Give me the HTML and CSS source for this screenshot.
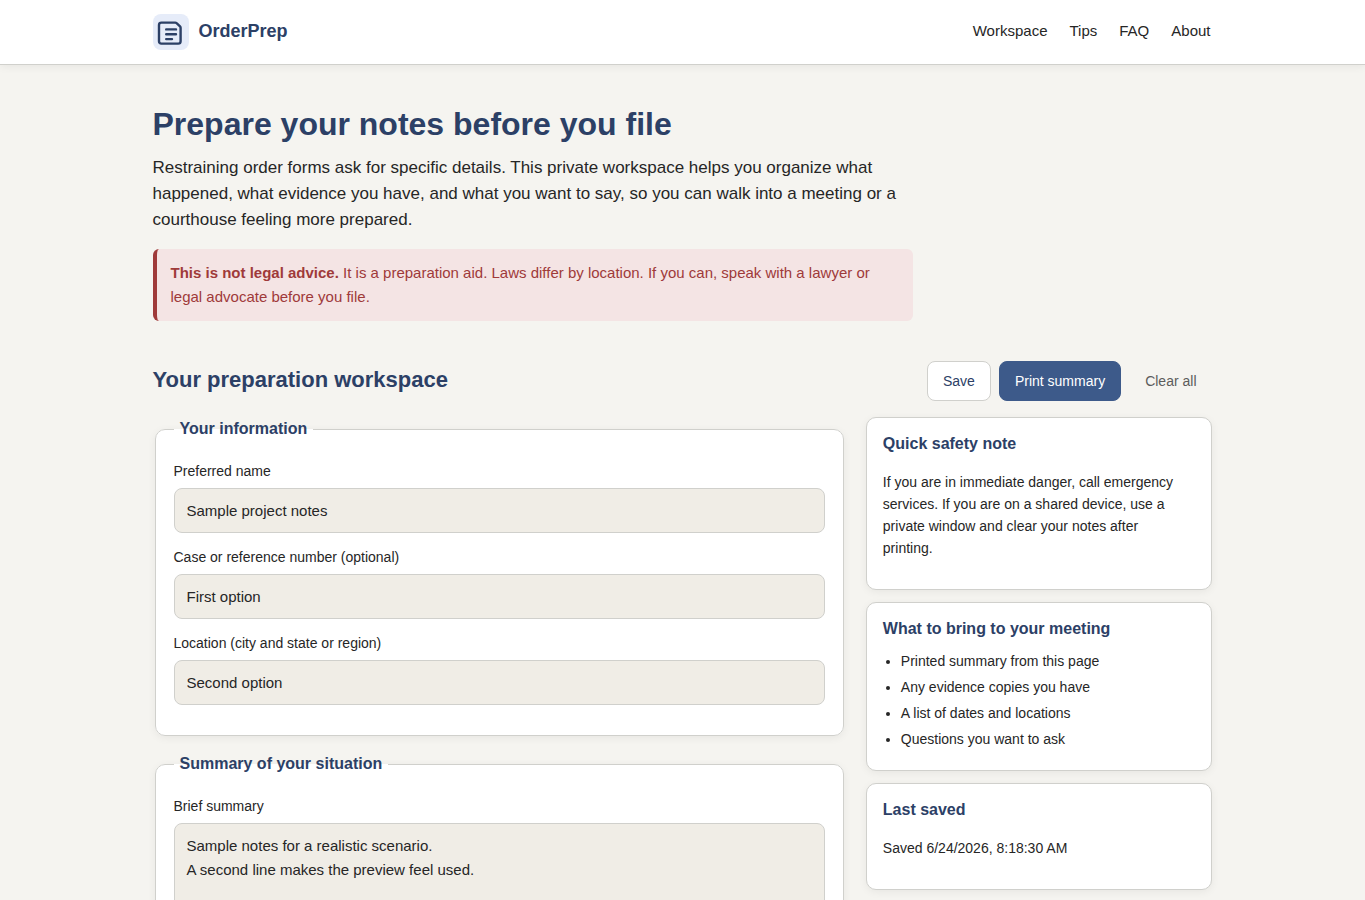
FILE: index.html
```html
<!DOCTYPE html>
<html lang="en">
<head>
  <meta charset="UTF-8">
  <meta name="viewport" content="width=device-width, initial-scale=1.0">
  <title>OrderPrep</title>
  <link rel="stylesheet" href="styles.css">
</head>
<body>
  <header class="site-header">
    <div class="container header-inner">
      <a class="brand" href="#">
        <svg class="logo" viewBox="0 0 36 36" aria-hidden="true">
          <rect width="36" height="36" rx="8" fill="#e6ecf9"/>
          <g fill="none" stroke="#2c4066" stroke-width="2.4" stroke-linecap="round" stroke-linejoin="round">
            <path d="M8.4 8.6H22.2Q23 8.6 23.6 9.2L27 12.4Q27.6 13 27.6 13.8V27.2Q27.6 29.6 25.2 29.6H8.4Q6 29.6 6 27.2V11Q6 8.6 8.4 8.6Z"/>
            <path d="M13.2 15.4H23M13.2 20.3H23M13.2 25.1H19"/>
          </g>
        </svg>
        <span>OrderPrep</span>
      </a>
      <nav class="site-nav">
        <a href="#workspace">Workspace</a>
        <a href="#tips">Tips</a>
        <a href="#faq">FAQ</a>
        <a href="#about">About</a>
      </nav>
    </div>
  </header>

  <main class="container">
    <section class="hero">
      <h1>Prepare your notes before you file</h1>
      <p class="lead">Restraining order forms ask for specific details. This private workspace helps you organize what happened, what evidence you have, and what you want to say, so you can walk into a meeting or a courthouse feeling more prepared.</p>
      <div class="notice">
        <strong>This is not legal advice.</strong> It is a preparation aid. Laws differ by location. If you can, speak with a lawyer or legal advocate before you file.
      </div>
    </section>

    <section id="workspace">
      <div class="workspace-header">
        <h2>Your preparation workspace</h2>
        <div class="actions">
          <button class="btn" type="button">Save</button>
          <button class="btn btn-primary" type="button">Print summary</button>
          <button class="btn btn-ghost" type="button">Clear all</button>
        </div>
      </div>

      <div class="workspace-grid">
        <form class="prep-form">
          <fieldset>
            <legend>Your information</legend>
            <label for="name">Preferred name</label>
            <input id="name" type="text" value="Sample project notes">
            <label for="case">Case or reference number (optional)</label>
            <input id="case" type="text" value="First option">
            <label for="location">Location (city and state or region)</label>
            <input id="location" type="text" value="Second option">
          </fieldset>

          <fieldset>
            <legend>Summary of your situation</legend>
            <label for="summary">Brief summary</label>
            <textarea id="summary" rows="5">Sample notes for a realistic scenario.
A second line makes the preview feel used.</textarea>
          </fieldset>
        </form>

        <aside class="sidebar">
          <div class="card">
            <h3>Quick safety note</h3>
            <p>If you are in immediate danger, call emergency services. If you are on a shared device, use a private window and clear your notes after printing.</p>
          </div>
          <div class="card">
            <h3>What to bring to your meeting</h3>
            <ul>
              <li>Printed summary from this page</li>
              <li>Any evidence copies you have</li>
              <li>A list of dates and locations</li>
              <li>Questions you want to ask</li>
            </ul>
          </div>
          <div class="card">
            <h3>Last saved</h3>
            <p>Saved 6/24/2026, 8:18:30 AM</p>
          </div>
        </aside>
      </div>
    </section>
  </main>
</body>
</html>
```
FILE: styles.css
```css
:root {
  --bg: #f5f4f0;
  --card: #ffffff;
  --field: #f0ede6;
  --text: #262626;
  --muted: #5c5c5c;
  --navy: #2c4066;
  --primary: #3d5a8a;
  --red: #9f3a3a;
  --red-bg: #f4e4e4;
  --border: #d0d0cc;
  --shadow: 0 2px 8px rgba(0, 0, 0, 0.06);
}

* {
  box-sizing: border-box;
}

body {
  margin: 0;
  background: var(--bg);
  color: var(--text);
  font-family: "Liberation Sans", Arial, sans-serif;
  font-size: 15px;
  line-height: 24px;
}

h1, h2, h3 {
  margin: 0;
  color: var(--navy);
}

.container {
  max-width: 1100px;
  margin: 0 auto;
  padding: 0 20px;
}

/* header */
.site-header {
  background: var(--card);
  border-bottom: 1px solid var(--border);
  box-shadow: var(--shadow);
}

.header-inner {
  display: flex;
  align-items: center;
  justify-content: space-between;
  padding-top: 14px;
  padding-bottom: 14px;
}

.brand {
  display: flex;
  gap: 10px;
  color: var(--navy);
  font-size: 18px;
  line-height: 34px;
  font-weight: bold;
  text-decoration: none;
}

.logo {
  width: 36px;
  height: 36px;
}

.site-nav {
  display: flex;
  gap: 18px;
  padding-bottom: 2px;
}

.site-nav a {
  padding: 0 2px;
  color: var(--text);
  text-decoration: none;
}

/* hero */
.hero {
  max-width: 760px;
  padding: 40px 0;
}

.hero h1 {
  font-size: 32px;
  line-height: 38px;
}

.lead {
  margin: 12px 0 16px;
  font-size: 17px;
  line-height: 26px;
}

.notice {
  padding: 12px 14px;
  border-left: 4px solid var(--red);
  border-radius: 6px;
  background: var(--red-bg);
  color: var(--red);
}

/* workspace */
.workspace-header {
  display: flex;
  flex-wrap: wrap;
  align-items: flex-start;
  justify-content: space-between;
  gap: 12px;
  margin-bottom: 16px;
}

.workspace-header h2 {
  font-size: 22px;
  line-height: 38px;
}

.actions {
  display: flex;
  gap: 8px;
}

.btn {
  padding: 8px 15px;
  border: 1px solid var(--border);
  border-radius: 8px;
  background: var(--card);
  color: var(--navy);
  font: inherit;
  font-size: 14px;
  line-height: 22px;
  cursor: pointer;
}

.btn-primary {
  border-color: var(--primary);
  background: var(--primary);
  color: #fff;
}

.btn-ghost {
  border-color: transparent;
  background: transparent;
  color: var(--muted);
}

.workspace-grid {
  display: grid;
  grid-template-columns: 2fr 1fr;
  align-items: start;
  gap: 20px;
  padding-bottom: 40px;
}

fieldset {
  margin: 0 2px 16px;
  padding: 18px;
  border: 1px solid var(--border);
  border-radius: 10px;
  background: var(--card);
  box-shadow: var(--shadow);
}

legend {
  padding: 0 6px;
  color: var(--navy);
  font-size: 16px;
  line-height: 24px;
  font-weight: bold;
}

label {
  display: block;
  margin-bottom: 5px;
  font-size: 14px;
  line-height: 24px;
}

input,
textarea {
  display: block;
  width: 100%;
  margin: 0 0 12px;
  padding: 10px 12px;
  border: 1px solid var(--border);
  border-radius: 8px;
  background: var(--field);
  color: var(--text);
  font: inherit;
}

input {
  height: 45px;
}

textarea {
  resize: vertical;
}

/* sidebar */
.sidebar {
  display: grid;
  gap: 12px;
}

.card {
  padding: 16px;
  border: 1px solid var(--border);
  border-radius: 10px;
  background: var(--card);
  box-shadow: var(--shadow);
  font-size: 14px;
  line-height: 22px;
}

.card h3 {
  font-size: 16px;
  line-height: 19px;
}

.card p {
  max-width: 300px;
  margin: 18px 0 14px;
}

.card ul {
  margin: 12px 0 0;
  padding-left: 18px;
}

.card li {
  margin-bottom: 4px;
}
```
